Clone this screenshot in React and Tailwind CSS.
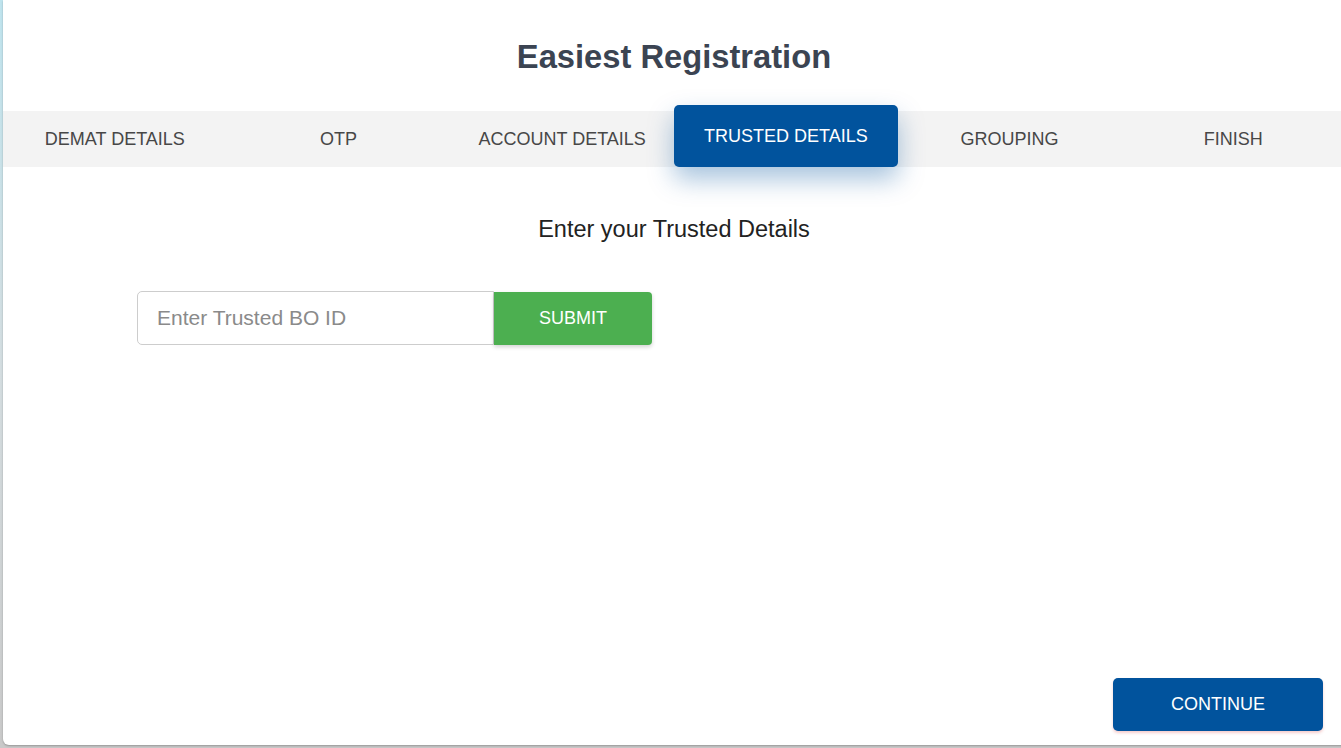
import React, { useState } from "react";

export default function App() {
  const [boId, setBoId] = useState("");

  const steps = ["DEMAT DETAILS", "OTP", "ACCOUNT DETAILS", "TRUSTED DETAILS", "GROUPING", "FINISH"];
  const active = 3;

  return (
    <div
      className="w-[1341px] h-[748px] overflow-hidden bg-gradient-to-b from-[#bfe4ee] via-[#d4dde0] to-[#c9c9c9]"
      style={{ fontFamily: '"Liberation Sans", Arial, sans-serif' }}
    >
      <div className="ml-[3px] w-[1342px] h-[745px] bg-white rounded-bl-[6px] shadow-[0_1px_2px_rgba(0,0,0,0.25)] flex flex-col">
        {/* Title */}
        <h1 className="pt-[38px] text-center text-[32.7px] leading-[38px] font-bold text-[#3b4452]">
          Easiest Registration
        </h1>

        {/* Step tabs */}
        <div className="mt-[35px] h-[56px] bg-[#f3f3f3] grid grid-cols-6">
          {steps.map((step, i) =>
            i === active ? (
              <div
                key={step}
                className="-mt-[6px] h-[62px] bg-[#01539d] rounded-[5px] flex items-center justify-center text-white text-[18px] shadow-[0_12px_26px_rgba(1,83,157,0.35)] z-10"
              >
                {step}
              </div>
            ) : (
              <div key={step} className="flex items-center justify-center pt-[1px] text-[18px] text-[#474747]">
                {step}
              </div>
            )
          )}
        </div>

        {/* Form */}
        <p className="mt-[48px] text-center text-[23.5px] leading-[28px] text-[#222]">Enter your Trusted Details</p>

        <div className="mt-[48px] pl-[134px] flex">
          <input
            value={boId}
            onChange={(e) => setBoId(e.target.value)}
            placeholder="Enter Trusted BO ID"
            className="w-[357px] h-[54px] border border-[#cdcdcd] rounded-l-[5px] px-[19px] text-[21px] text-[#333] placeholder:text-[#8a8a8a] outline-none"
          />
          <button className="mt-[1px] w-[158px] h-[53px] bg-[#4caf50] text-white text-[18px] rounded-r-[4px] shadow-[0_2px_4px_rgba(0,0,0,0.18)]">
            SUBMIT
          </button>
        </div>

        <div className="mt-auto mb-[14px] pr-[22px] flex justify-end">
          <button className="w-[210px] h-[53px] bg-[#01539d] text-white text-[18px] rounded-[5px] shadow-[0_2px_3px_rgba(220,60,60,0.25)]">
            CONTINUE
          </button>
        </div>
      </div>
    </div>
  );
}
